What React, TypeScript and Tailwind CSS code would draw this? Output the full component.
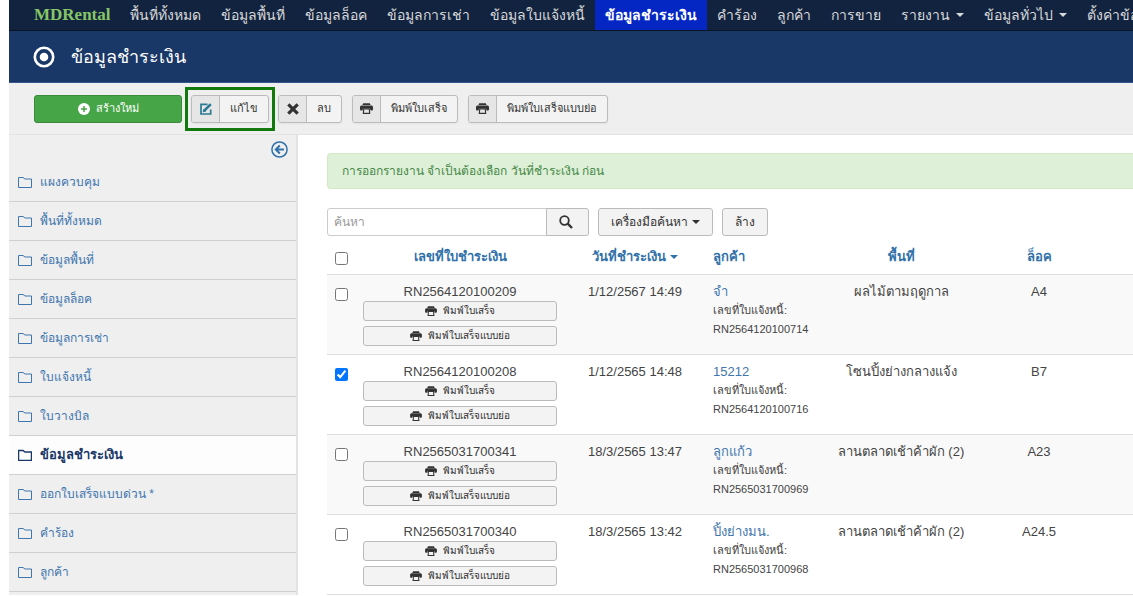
import { ReactNode, useState } from "react";
import clsx from "clsx";

const menu = [
  { label: "พื้นที่ทั้งหมด" },
  { label: "ข้อมูลพื้นที่" },
  { label: "ข้อมูลล็อค" },
  { label: "ข้อมูลการเช่า" },
  { label: "ข้อมูลใบแจ้งหนี้" },
  { label: "ข้อมูลชำระเงิน", active: true },
  { label: "คำร้อง" },
  { label: "ลูกค้า" },
  { label: "การขาย" },
  { label: "รายงาน", caret: true },
  { label: "ข้อมูลทั่วไป", caret: true },
  { label: "ตั้งค่าข้อมูล", caret: true },
];

const sideMenu = [
  "แผงควบคุม",
  "พื้นที่ทั้งหมด",
  "ข้อมูลพื้นที่",
  "ข้อมูลล็อค",
  "ข้อมูลการเช่า",
  "ใบแจ้งหนี้",
  "ใบวางบิล",
  "ข้อมูลชำระเงิน",
  "ออกใบเสร็จแบบด่วน *",
  "คำร้อง",
  "ลูกค้า",
];

const payments = [
  {
    id: "RN2564120100209",
    date: "1/12/2567 14:49",
    customer: "จำ",
    invoice: "RN2564120100714",
    area: "ผลไม้ตามฤดูกาล",
    lock: "A4",
  },
  {
    id: "RN2564120100208",
    date: "1/12/2565 14:48",
    customer: "15212",
    invoice: "RN2564120100716",
    area: "โซนปิ้งย่างกลางแจ้ง",
    lock: "B7",
  },
  {
    id: "RN2565031700341",
    date: "18/3/2565 13:47",
    customer: "ลูกแก้ว",
    invoice: "RN2565031700969",
    area: "ลานตลาดเช้าค้าผัก (2)",
    lock: "A23",
  },
  {
    id: "RN2565031700340",
    date: "18/3/2565 13:42",
    customer: "ปิ้งย่างมน.",
    invoice: "RN2565031700968",
    area: "ลานตลาดเช้าค้าผัก (2)",
    lock: "A24.5",
  },
];

const PrintIcon = ({ small }: { small?: boolean }) => (
  <svg
    viewBox="0 0 13 11"
    className={clsx("shrink-0", small ? "h-2.5 w-3" : "h-[11px] w-[13px]")}
    fill="#333"
  >
    <path d="M3.200.2h6.600l.8 1.900H2.400z" />
    <path d="M1.800 2.600h9.400c1.100 0 1.800.7 1.800 1.700v1.900c0 .8-.5 1.300-1.300 1.300h-1.200L10 5.600H3l-.5 1.900H1.300C.5 7.500 0 7 0 6.200V4.300c0-1 .7-1.700 1.800-1.700z" />
    <path d="M3.200 5.300h6.600l.5 5.700H2.700zM4.200 6.600L4 9.800h5l-.2-3.200z" fillRule="evenodd" />
  </svg>
);

const FolderIcon = ({ bold }: { bold?: boolean }) => (
  <svg
    viewBox="0 0 14 12"
    className="h-3 w-3.5 shrink-0"
    fill="none"
    stroke="currentColor"
    strokeWidth={bold ? 1.5 : 1}
  >
    <path d="M.5 11.500V1.500h4.500l2 1.500h6.500v8.500z" />
  </svg>
);

const Caret = () => (
  <span className="inline-block border-x-4 border-t-4 border-x-transparent border-t-current" />
);

const ToolButton = ({
  icon,
  children,
}: {
  icon: ReactNode;
  children: ReactNode;
}) => (
  <button
    type="button"
    className="flex h-7 overflow-hidden rounded-[3px] border border-[#bbb] bg-[#f3f3f3] text-[11px] text-[#333] shadow-xs"
  >
    <span className="flex h-full w-7 items-center justify-center border-r border-[#bbb] bg-[#e6e6e6]">
      {icon}
    </span>
    <span className="flex h-full items-center px-2.5">{children}</span>
  </button>
);

const RowButton = ({ children }: { children: ReactNode }) => (
  <button
    type="button"
    className="flex h-5 w-full items-center justify-center gap-1.5 rounded-[3px] border border-[#bbb] bg-[#f3f3f3] text-[10px] text-[#333]"
  >
    <PrintIcon small />
    {children}
  </button>
);

const Navbar = () => (
  <nav className="flex h-[31px] items-center overflow-hidden border-b border-[#0b1423] bg-[#12233f] pl-[15px] text-sm whitespace-nowrap text-[#d9d9d9]">
    <a
      href="#"
      className="px-2.5 font-['Liberation_Serif',serif] text-[17px] font-bold text-[#86c566]"
    >
      MDRental
    </a>
    {menu.map(({ label, active, caret }) => (
      <a
        key={label}
        href="#"
        className={clsx(
          "flex h-full shrink-0 items-center gap-1.5 px-2.5",
          active && "bg-[#0427c4] font-bold text-white"
        )}
      >
        {label}
        {caret && <Caret />}
      </a>
    ))}
  </nav>
);

const Toolbar = () => (
  <div className="flex h-[52px] items-center border-b border-[#e3e3e3] bg-[#efefef] pl-[25px]">
    <button
      type="button"
      className="flex h-7 w-[148px] items-center justify-center gap-1.5 rounded-[3px] border border-[#3a8a3a] bg-[#46a546] text-[11px] text-white"
    >
      <svg viewBox="0 0 12 12" className="size-3">
        <circle cx="6" cy="6" r="6" fill="#fff" />
        <path d="M6 3v6M3 6h6" stroke="#46a546" strokeWidth="1.500" />
      </svg>
      สร้างใหม่
    </button>
    <div className="mx-[3px] border-[3px] border-[#127a0c] px-[3px] py-[5px]">
      <ToolButton
        icon={
          <svg viewBox="0 0 12 12" className="size-3" fill="none" stroke="#2b7a93">
            <path d="M7.500 1.300H1v9.700h9.700V6.500" strokeWidth="1.700" />
            <path d="M4.800 7.200L10.800 1.200" strokeWidth="2.600" />
            <path d="M3.200 8.800l.8-2.800 2 2z" fill="#2b7a93" />
          </svg>
        }
      >
        แก้ไข
      </ToolButton>
    </div>
    <div className="flex gap-2.5">
      <ToolButton
        icon={
          <svg viewBox="0 0 12 12" className="size-3" stroke="#333" strokeWidth="3.200">
            <path d="M1.300 1.300l9.400 9.400M10.700 1.300L1.300 10.700" />
          </svg>
        }
      >
        ลบ
      </ToolButton>
      <ToolButton icon={<PrintIcon />}>พิมพ์ใบเสร็จ</ToolButton>
      <ToolButton icon={<PrintIcon />}>พิมพ์ใบเสร็จแบบย่อ</ToolButton>
    </div>
  </div>
);

const Sidebar = () => (
  <aside className="w-[289px] shrink-0 border-r-2 border-[#e3e3e3] bg-[#efefef]">
    <div className="flex h-7 items-center justify-end pr-2">
      <button type="button" aria-label="Toggle sidebar">
        <svg viewBox="0 0 17 17" className="size-[17px]" fill="none" stroke="#3071a9">
          <circle cx="8.500" cy="8.500" r="7.600" strokeWidth="1.500" />
          <path d="M13 8.500H5M8.800 4.500l-4 4 4 4" strokeWidth="2" />
        </svg>
      </button>
    </div>
    <ul>
      {sideMenu.map((label) => {
        const active = label === "ข้อมูลชำระเงิน";
        return (
          <li key={label}>
            <a
              href="#"
              className={clsx(
                "flex h-[39px] items-center gap-2 border-b border-[#d0d0d0] pl-[9px]",
                active
                  ? "bg-[#fdfdfd] text-[13px] font-bold text-[#1a3867]"
                  : "text-xs text-[#3f76ae]"
              )}
            >
              <FolderIcon bold={active} />
              {label}
            </a>
          </li>
        );
      })}
    </ul>
  </aside>
);

const SearchBar = () => (
  <form
    className="mt-[19px] flex h-7 text-xs text-[#333]"
    onSubmit={(e) => e.preventDefault()}
  >
    <input
      type="text"
      aria-label="ค้นหา"
      placeholder="ค้นหา"
      className="w-[220px] rounded-l-[3px] border border-[#ccc] px-1.5 placeholder:text-[#999]"
    />
    <button
      type="submit"
      aria-label="ค้นหา"
      className="-ml-px flex w-[43px] items-center justify-center rounded-r-[3px] border border-[#bbb] bg-[#f3f3f3] pr-1"
    >
      <svg viewBox="0 0 14 14" className="size-3.5" fill="none" stroke="#333">
        <circle cx="5.500" cy="5.500" r="4.300" strokeWidth="1.800" />
        <path d="M8.700 8.700l4.300 4.300" strokeWidth="2.400" />
      </svg>
    </button>
    <button
      type="button"
      className="ml-[9px] flex items-center gap-1 rounded-[3px] border border-[#bbb] bg-[#f3f3f3] px-3"
    >
      เครื่องมือค้นหา <Caret />
    </button>
    <button
      type="button"
      className="ml-[9px] rounded-[3px] border border-[#bbb] bg-[#f3f3f3] px-3"
    >
      ล้าง
    </button>
  </form>
);

const PaymentTable = () => {
  const [selected, setSelected] = useState(["RN2564120100208"]);
  const toggle = (id: string) =>
    setSelected((ids) =>
      ids.includes(id) ? ids.filter((i) => i !== id) : [...ids, id]
    );
  const allSelected = selected.length === payments.length;

  return (
    <table className="w-full table-fixed text-[13px] leading-[19px] text-[#444]">
      <colgroup>
        <col className="w-7" />
        <col className="w-[210px]" />
        <col className="w-[140px]" />
        <col className="w-[115px]" />
        <col className="w-[162px]" />
        <col className="w-[114px]" />
        <col />
      </colgroup>
      <thead>
        <tr className="h-[38px] text-[#3071a9] [&>th]:pt-1">
          <th>
            <input
              type="checkbox"
              aria-label="Select all"
              className="mt-1 ml-2 block size-[13px]"
              checked={allSelected}
              onChange={() =>
                setSelected(allSelected ? [] : payments.map((p) => p.id))
              }
            />
          </th>
          <th>
            <a href="#">เลขที่ใบชำระเงิน</a>
          </th>
          <th>
            <a href="#" className="inline-flex items-center gap-1">
              วันที่ชำระเงิน <Caret />
            </a>
          </th>
          <th className="pl-2 text-left">
            <a href="#">ลูกค้า</a>
          </th>
          <th>
            <a href="#">พื้นที่</a>
          </th>
          <th>
            <a href="#">ล็อค</a>
          </th>
          <th />
        </tr>
      </thead>
      <tbody>
        {payments.map((p) => (
          <tr
            key={p.id}
            className="h-20 border-t border-[#ddd] text-center align-top last:border-b odd:bg-[#f9f9f9]"
          >
            <td className="pt-[13px]">
              <input
                type="checkbox"
                aria-label={p.id}
                className="ml-2 block size-[13px]"
                checked={selected.includes(p.id)}
                onChange={() => toggle(p.id)}
              />
            </td>
            <td className="px-2 pt-[7px]">
              {p.id}
              <div className="flex flex-col gap-[5px]">
                <RowButton>พิมพ์ใบเสร็จ</RowButton>
                <RowButton>พิมพ์ใบเสร็จแบบย่อ</RowButton>
              </div>
            </td>
            <td className="pt-[7px]">{p.date}</td>
            <td className="pt-[7px] pl-2 text-left">
              <a href="#" className="text-[#3f76ae]">
                {p.customer}
              </a>
              <div className="text-[11px]">
                เลขที่ใบแจ้งหนี้:
                <br />
                {p.invoice}
              </div>
            </td>
            <td className="pt-[7px]">{p.area}</td>
            <td className="pt-[7px]">{p.lock}</td>
            <td />
          </tr>
        ))}
      </tbody>
    </table>
  );
};

const App = () => {
  return (
    <div className="h-screen overflow-hidden bg-white pl-[9px] font-['Liberation_Sans',Arial,sans-serif]">
      <Navbar />
      <header className="flex h-[52px] items-center gap-4 border-b border-[#34568c] bg-[#1a3867] pl-6 text-white">
        <svg viewBox="0 0 22 22" className="size-[22px]" fill="none">
          <circle cx="11" cy="11" r="9.200" stroke="#fff" strokeWidth="2.600" />
          <circle cx="11" cy="11" r="4.300" fill="#fff" />
        </svg>
        <h1 className="text-lg">ข้อมูลชำระเงิน</h1>
      </header>
      <Toolbar />
      <div className="flex">
        <Sidebar />
        <main className="min-w-0 flex-1 pt-[18px] pl-[29px]">
          <div className="flex h-9 items-center rounded-l border-y border-l border-[#d6e9c6] bg-[#dff0d8] pl-3.5 text-xs text-[#468847]">
            การออกรายงาน จำเป็นต้องเลือก วันที่ชำระเงิน ก่อน
          </div>
          <SearchBar />
          <PaymentTable />
        </main>
      </div>
    </div>
  );
};

export default App;
